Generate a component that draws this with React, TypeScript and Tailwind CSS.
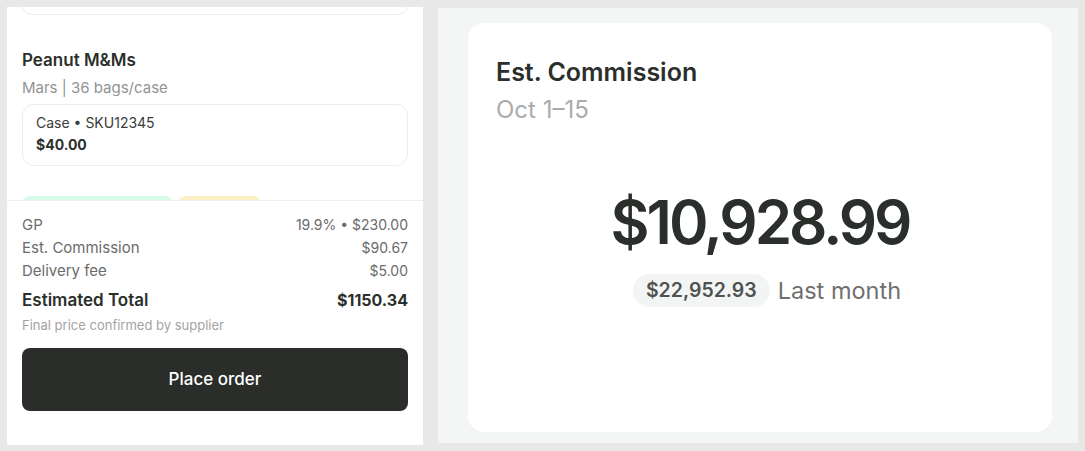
import React from 'react';

const font = { fontFamily: 'Inter, "Noto Sans", sans-serif' };

type Row = { label: string; value: string };

const rows: Row[] = [
    { label: 'GP', value: '19.9% • $230.00' },
    { label: 'Est. Commission', value: '$90.67' },
    { label: 'Delivery fee', value: '$5.00' },
];

const OrderPanel: React.FC = () => {
    return (
        <div className="mt-[7px] ml-[7px] flex h-[438px] w-[416px] flex-col bg-white">
            <div className="h-[193px] overflow-hidden px-[15px]">
                <div className="-mt-[12px] h-[20px] rounded-xl border border-[#ececec]"></div>
                <div className="mt-[33px] text-[17px] font-semibold leading-[24px] text-[#2b2f2c]">Peanut M&amp;Ms</div>
                <div className="mt-[6px] text-[15px] leading-[20px] text-[#929292]">Mars | 36 bags/case</div>
                <div className="mt-[6px] rounded-xl border border-[#ececec] px-[13px] pt-[8px] pb-[10px]">
                    <div className="text-[14px] leading-[20px] text-[#3a3d3a]">Case • SKU12345</div>
                    <div className="mt-[2px] text-[14px] font-bold leading-[20px] text-[#2b2f2c]">$40.00</div>
                </div>
                <div className="mt-[30px] flex gap-[5px]">
                    <div className="h-[20px] w-[151px] rounded-lg bg-[#d8fbe8]"></div>
                    <div className="h-[20px] w-[83px] rounded-lg bg-[#fdf0c6]"></div>
                </div>
            </div>
            <div className="flex flex-1 flex-col border-t border-[#eeeeee] px-[15px] pt-[12px]">
                {rows.map((row) => (
                    <div key={row.label} className="flex justify-between text-[15px] leading-[23px] text-[#6b6b6b]">
                        <span>{row.label}</span>
                        <span className="text-[14px]">{row.value}</span>
                    </div>
                ))}
                <div className="mt-[5px] flex justify-between text-[17px] font-semibold leading-[26px] text-[#2b2f2c]">
                    <span>Estimated Total</span>
                    <span className="text-[16px] font-bold">$1150.34</span>
                </div>
                <div className="mt-[4px] text-[13px] leading-[16px] text-[#a3a3a3]">Final price confirmed by supplier</div>
                <button className="mt-[15px] flex h-[63px] w-full items-center justify-center rounded-lg bg-[#2a2d2a] text-[17px] font-medium text-white">
                    Place order
                </button>
            </div>
        </div>
    );
};

const CommissionPanel: React.FC = () => {
    return (
        <div className="mt-[8px] ml-[15px] h-[435px] w-[640px] bg-[#f4f6f5] pt-[15px] pl-[30px]">
            <div className="flex h-[409px] w-[584px] flex-col rounded-2xl bg-white pt-[33px] pl-[28px]">
                <div className="text-[25px] font-semibold leading-[32px] text-[#2b2f2c]">Est. Commission</div>
                <div className="mt-[7px] text-[24px] leading-[30px] text-[#ababab]">Oct 1–15</div>
                <div className="mt-[61px] -ml-[28px] flex flex-col items-center">
                    <div className="text-[60px] font-semibold leading-[72px] tracking-[-3px] text-[#2b2f2c]">$10,928.99</div>
                    <div className="mt-[16px] ml-[14px] flex items-center gap-[8px]">
                        <span className="rounded-full bg-[#f3f5f4] px-[13px] text-[19.5px] font-semibold leading-[33px] text-[#4f524f]">$22,952.93</span>
                        <span className="text-[23.5px] leading-[33px] text-[#6f6f6f]">Last month</span>
                    </div>
                </div>
            </div>
        </div>
    );
};

const App: React.FC = () => {
    return (
        <div className="flex h-[451px] w-[1085px] bg-[#e8e8e8]" style={font}>
            <OrderPanel />
            <CommissionPanel />
        </div>
    );
};

export default App;
